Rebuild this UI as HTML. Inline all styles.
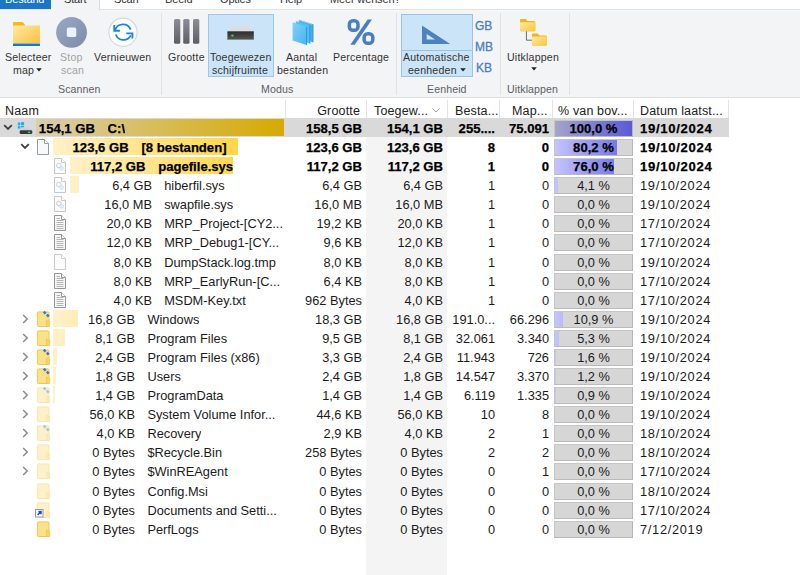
<!DOCTYPE html>
<html><head><meta charset="utf-8">
<style>
*{box-sizing:border-box}
html,body{margin:0;padding:0}
body{width:800px;height:575px;position:relative;overflow:hidden;background:#fff;font-family:"Liberation Sans",sans-serif;color:#1b1b1b}
.a{position:absolute}
.tab{position:absolute;top:-8.5px;font-size:11px;line-height:14px;white-space:nowrap;color:#333;letter-spacing:-.15px}
.rb{position:absolute;font-size:10.6px;line-height:12px;color:#333;white-space:nowrap;letter-spacing:.2px}
.gl{position:absolute;font-size:10.6px;line-height:12px;color:#5e5e5e;white-space:nowrap;top:83px;letter-spacing:.1px}
.sep{position:absolute;top:13px;width:1px;height:82px;background:#e1e2e4}
.hd{position:absolute;top:101.7px;height:19px;font-size:12.5px;line-height:19px;color:#222;white-space:nowrap;letter-spacing:.15px}
.hdiv{position:absolute;top:100px;width:1px;height:18px;background:#e3e3e3}
.row{position:absolute;left:0;width:800px;height:19px;font-size:12.8px;line-height:19px;white-space:nowrap;color:#1b1b1b}
.row span{position:absolute;top:1px}
.b{font-weight:bold;color:#000;font-size:13.1px;-webkit-text-stroke:.25px #000}
.pb{position:absolute;left:554px;width:79px;top:1.8px;height:17px;background:#d6d6d6;border:1px solid #c6c6c6;border-right-color:#b6b6b6;border-bottom-color:#bababa}
.pf{position:absolute;left:0;top:0;bottom:0;background:linear-gradient(90deg,#c4c4ff,#6464e0)}
.pt{position:absolute;left:0;right:0;top:-0.9px;text-align:center;line-height:17px}
.yb{position:absolute;top:1.4px;height:17px}
</style></head><body>

<!-- tab bar -->
<div class="a" style="left:0;top:0;width:800px;height:10px;background:#fff;border-bottom:1px solid #e3e3e3"></div>
<div class="a" style="left:0;top:0;width:51px;height:9.3px;background:#1976c9"></div>
<div class="a" style="left:51px;top:0;width:49px;height:10px;background:#f3f4f6;border-right:1px solid #dcdcdc"></div>
<div class="tab" style="left:5px;color:#fff">Bestand</div>
<div class="tab" style="left:64px">Start</div>
<div class="tab" style="left:114px">Scan</div>
<div class="tab" style="left:165px">Beeld</div>
<div class="tab" style="left:220px">Opties</div>
<div class="tab" style="left:280px">Help</div>
<div class="tab" style="left:330px">Meer wensen?</div>

<!-- ribbon -->
<div class="a" style="left:0;top:10px;width:800px;height:88px;background:#f3f4f6;border-bottom:1px solid #dfe0e2"></div>

<!-- Selecteer map -->
<svg class="a" style="left:12px;top:21px" width="30" height="26" viewBox="0 0 30 26">
 <defs><linearGradient id="fg" x1="0" y1="0" x2="1" y2="1"><stop offset="0" stop-color="#ffe9a6"/><stop offset="1" stop-color="#fcc13a"/></linearGradient></defs>
 <path d="M1 2 Q1 1 2 1 H10.5 L13 3.5 V8 H1 Z" fill="#f6b91c"/>
 <rect x="1" y="4.5" width="27" height="17.5" rx="0.8" fill="url(#fg)"/>
 <rect x="1" y="22.5" width="27" height="2.6" rx="0.5" fill="#1677d2"/>
</svg>
<div class="rb" style="left:5px;top:51px">Selecteer</div>
<div class="rb" style="left:13px;top:63.5px">map</div>
<svg class="a" style="left:35.5px;top:67.5px" width="6" height="4" viewBox="0 0 6 4"><path d="M0.2 0.3 H5.8 L3 3.6 Z" fill="#222"/></svg>

<!-- Stop scan -->
<svg class="a" style="left:55px;top:16px" width="33" height="33" viewBox="0 0 33 33">
 <defs><linearGradient id="sg" x1="0" y1="0" x2="1" y2="1"><stop offset="0" stop-color="#9aa9c2"/><stop offset="1" stop-color="#7b8baa"/></linearGradient></defs>
 <circle cx="16.55" cy="16.35" r="15.45" fill="url(#sg)"/>
 <rect x="11.8" y="11.6" width="9.5" height="9.4" rx="1.8" fill="#ebf2ff"/>
</svg>
<div class="rb" style="left:60px;top:51px;color:#a3a3a3">Stop</div>
<div class="rb" style="left:61px;top:63.5px;color:#a3a3a3">scan</div>

<!-- Vernieuwen -->
<svg class="a" style="left:108px;top:17px" width="31" height="31" viewBox="0 0 31 31">
 <circle cx="15" cy="15.2" r="14.1" fill="#fff" stroke="#d3d9e3" stroke-width="1.2"/>
 <path d="M7.0 13.8 A8.2 8.2 0 0 1 22.65 12.65" fill="none" stroke="#1a84de" stroke-width="1.8"/>
 <path d="M6.25 8.1 V13.75 H11.9" fill="none" stroke="#1a84de" stroke-width="1.9"/>
 <path d="M7.75 17.5 A8.2 8.2 0 0 0 22.8 18.3" fill="none" stroke="#1a84de" stroke-width="1.8"/>
 <path d="M18.3 16.4 H24.4 V21.6" fill="none" stroke="#1a84de" stroke-width="1.9"/>
</svg>
<div class="rb" style="left:94px;top:51px">Vernieuwen</div>
<div class="gl" style="left:58px">Scannen</div>
<div class="sep" style="left:161px"></div>

<!-- Grootte -->
<svg class="a" style="left:173px;top:18px" width="28" height="27" viewBox="0 0 28 27">
 <defs><linearGradient id="gg" x1="0" y1="0" x2="0" y2="1"><stop offset="0" stop-color="#8b8e96"/><stop offset="1" stop-color="#5c5e66"/></linearGradient></defs>
 <rect x="1" y="1" width="6.3" height="24.8" rx="1.5" fill="url(#gg)"/>
 <rect x="10.2" y="1" width="6.3" height="24.8" rx="1.5" fill="url(#gg)"/>
 <rect x="20" y="1" width="6.3" height="24.8" rx="1.5" fill="url(#gg)"/>
</svg>
<div class="rb" style="left:168px;top:51px">Grootte</div>

<!-- Toegewezen schijfruimte (selected) -->
<div class="a" style="left:208px;top:14px;width:66px;height:63px;background:#cce4f7;border:1px solid #99c8ee"></div>
<svg class="a" style="left:226px;top:25px" width="29" height="16" viewBox="0 0 29 16">
 <defs><linearGradient id="dg" x1="0" y1="0" x2="0" y2="1"><stop offset="0" stop-color="#2c2c2c"/><stop offset="1" stop-color="#555"/></linearGradient></defs>
 <path d="M6.8 1 H21.9 L26.6 6.3 H2.3 Z" fill="#dcdde0"/>
 <rect x="1.4" y="6.3" width="26.4" height="8.3" fill="url(#dg)"/>
 <rect x="1.4" y="14.2" width="26.4" height="0.8" fill="#8a8a8a"/>
 <circle cx="6.4" cy="10.6" r="1.2" fill="#3ad34e"/>
</svg>
<div class="rb" style="left:210px;top:51px">Toegewezen</div>
<div class="rb" style="left:212px;top:63.5px">schijfruimte</div>

<!-- Aantal bestanden -->
<svg class="a" style="left:291px;top:19px" width="24" height="28" viewBox="0 0 24 28">
 <defs><linearGradient id="bg1" x1="0" y1="0" x2="1" y2="1"><stop offset="0" stop-color="#80d2f8"/><stop offset="1" stop-color="#46b4f1"/></linearGradient></defs>
 <path d="M8 0.8 L22 5.2 V23.3 L8 19 Z" fill="#45b0ee"/>
 <path d="M8 0.8 L22 5.2 L20.5 5.5 L6.5 1.2 Z" fill="#8fd6f8"/>
 <path d="M4.8 2 L18.8 6.5 V24.6 L4.8 20.3 Z" fill="#58bef4"/>
 <path d="M18.8 6.5 V24.6" stroke="#2a8fd6" stroke-width="0.9"/>
 <path d="M1.6 3.3 L15.6 7.8 V26 L1.6 21.6 Z" fill="url(#bg1)"/>
 <path d="M15.6 7.8 V26" stroke="#2a8fd6" stroke-width="0.9"/>
 <path d="M22 5.2 V23.3" stroke="#2a8fd6" stroke-width="0.9"/>
</svg>
<div class="rb" style="left:286px;top:51px">Aantal</div>
<div class="rb" style="left:277px;top:63.5px">bestanden</div>

<!-- Percentage -->
<svg class="a" style="left:346px;top:18px" width="30" height="28" viewBox="0 0 30 28">
 <rect x="3.35" y="2.75" width="8.65" height="9.5" rx="3.6" fill="none" stroke="#4a7fbf" stroke-width="3.5"/>
 <rect x="18.15" y="15.75" width="8.65" height="9.5" rx="3.6" fill="none" stroke="#4a7fbf" stroke-width="3.5"/>
 <path d="M4.3 26.8 L8.7 26.8 L26 1.6 L21.6 1.6 Z" fill="#4a7fbf"/>
</svg>
<div class="rb" style="left:333px;top:51px">Percentage</div>
<div class="gl" style="left:261px">Modus</div>
<div class="sep" style="left:396px"></div>

<!-- Automatische eenheden -->
<div class="a" style="left:401px;top:14px;width:72px;height:63px;background:#cce4f7;border:1px solid #94c4ec"></div>
<div class="a" style="left:402px;top:50px;width:70px;height:1px;background:#94c4ec"></div>
<svg class="a" style="left:421px;top:25px" width="31" height="21" viewBox="0 0 31 21">
 <path d="M1 0.6 L29.2 18.9 H1 Z" fill="#4d82be"/>
 <path d="M5.7 8.9 L14.1 14.4 H5.7 Z" fill="#cce4f7"/>
</svg>
<div class="rb" style="left:403px;top:51px">Automatische</div>
<div class="rb" style="left:408px;top:63.5px">eenheden</div>
<svg class="a" style="left:460px;top:67.8px" width="6" height="4" viewBox="0 0 6 4"><path d="M0.2 0.3 H5.8 L3 3.6 Z" fill="#222"/></svg>
<div class="a" style="left:475px;top:19px;font-size:12px;line-height:14px;color:#4a7fbf;-webkit-text-stroke:.3px #4a7fbf">GB</div>
<div class="a" style="left:475px;top:40px;font-size:12px;line-height:14px;color:#4a7fbf;-webkit-text-stroke:.3px #4a7fbf">MB</div>
<div class="a" style="left:476px;top:61px;font-size:12px;line-height:14px;color:#4a7fbf;-webkit-text-stroke:.3px #4a7fbf">KB</div>
<div class="gl" style="left:427px">Eenheid</div>
<div class="sep" style="left:500px"></div>

<!-- Uitklappen -->
<svg class="a" style="left:519px;top:18px" width="30" height="30" viewBox="0 0 30 30">
 <defs><linearGradient id="ug" x1="0" y1="0" x2="1" y2="1"><stop offset="0" stop-color="#ffe9a0"/><stop offset="1" stop-color="#fcc53c"/></linearGradient></defs>
 <path d="M7.4 13 V22.2 H13" fill="none" stroke="#6a6a6a" stroke-width="1"/>
 <path d="M1 2.2 Q1 1 2.2 1 H6.8 L8.6 3 H15.2 Q16.3 3 16.3 4 V12 Q16.3 13.2 15.2 13.2 H2.2 Q1 13.2 1 12 Z" fill="#f3b510"/>
 <rect x="1" y="4.2" width="15.3" height="9" rx="0.9" fill="url(#ug)"/>
 <path d="M12.9 16.6 Q12.9 15.4 14.1 15.4 H18.7 L20.5 17.4 H26.6 Q27.75 17.4 27.75 18.4 V26.4 Q27.75 27.6 26.6 27.6 H14.1 Q12.9 27.6 12.9 26.4 Z" fill="#f3b510"/>
 <rect x="12.9" y="18.6" width="14.85" height="9" rx="0.9" fill="url(#ug)"/>
</svg>
<div class="rb" style="left:507px;top:51px">Uitklappen</div>
<svg class="a" style="left:530.5px;top:67.3px" width="6" height="4" viewBox="0 0 6 4"><path d="M0.2 0.3 H5.8 L3 3.6 Z" fill="#222"/></svg>
<div class="gl" style="left:507px">Uitklappen</div>
<div class="sep" style="left:569px"></div>

<!-- header -->
<div class="a" style="left:366px;top:118px;width:81px;height:457px;background:#f4f4f4"></div>
<div class="hd" style="left:5px">Naam</div>
<div class="hdiv" style="left:285px"></div>
<div class="hd" style="right:440px">Grootte</div>
<div class="hdiv" style="left:366px"></div>
<div class="hd" style="left:374px">Toegew...</div>
<svg class="a" style="left:432px;top:108px" width="8" height="5" viewBox="0 0 8 5"><path d="M0.5 0.5 L4 4 L7.5 0.5" fill="none" stroke="#9a9a9a" stroke-width="1"/></svg>
<div class="hdiv" style="left:447px"></div>
<div class="hd" style="left:455px">Besta...</div>
<div class="hdiv" style="left:499px"></div>
<div class="hd" style="left:512px">Map...</div>
<div class="hdiv" style="left:552px"></div>
<div class="hd" style="left:558px">% van bov...</div>
<div class="hdiv" style="left:633px"></div>
<div class="hd" style="left:640px">Datum laatst...</div>
<div class="hdiv" style="left:728px"></div>

<div class="row b" style="top:118.00px;background:linear-gradient(90deg,#d9d9d9 0,#d9d9d9 729px,transparent 729px);"><svg class="a" style="left:3px;top:6px" width="10" height="7" viewBox="0 0 10 7"><path d="M1.2 1.2 L5 5 L8.8 1.2" fill="none" stroke="#404040" stroke-width="1.8"/></svg><svg class="a" style="left:17px;top:3px" width="17" height="16" viewBox="0 0 17 16"><rect x="0.8" y="1.5" width="2.5" height="2.6" fill="#14b6f2"/><rect x="4" y="1.1" width="3.1" height="3" fill="#14b6f2"/><rect x="0.8" y="4.8" width="2.5" height="2.8" fill="#14b6f2"/><rect x="4" y="4.8" width="3.1" height="3" fill="#14b6f2"/><path d="M4.5 6.2 L12 6.2 L14.5 9.3 L3 9.3 Z" fill="#cfd3d9"/><rect x="2.7" y="9.3" width="12.6" height="3.8" rx="1.3" fill="#383838"/><rect x="10.9" y="10.4" width="2.4" height="1.6" rx=".6" fill="#3fcf4a"/></svg><div class="yb" style="left:36px;width:248.0px;background:linear-gradient(90deg,#d9ceae,#d6aa00);background-size:248.0px 100%"></div><span class="sz" style="right:705.1px">154,1 GB</span><span class="nm" style="left:107.6px;max-width:176.4px;overflow:hidden">C:\</span><span style="right:438px">158,5 GB</span><span style="right:357px">154,1 GB</span><span style="right:305px">255....</span><span style="right:251px">75.091</span><div class="pb"><div class="pf" style="width:77.0px;background:linear-gradient(90deg,#a4a4cc,#5a5ad6);background-size:77px 100%"></div><div class="pt">100,0 %</div></div><span style="left:640px;letter-spacing:.7px">19/10/2024</span></div>
<div class="row b" style="top:137.00px;"><svg class="a" style="left:20px;top:6px" width="10" height="7" viewBox="0 0 10 7"><path d="M1.2 1.2 L5 5 L8.8 1.2" fill="none" stroke="#404040" stroke-width="1.8"/></svg><svg class="a" style="left:37px;top:2px" width="13" height="16" viewBox="0 0 13 16"><path d="M0.5 0.5 H7.5 L11.5 4.5 V15.5 H0.5 Z" fill="#f8f9fb" stroke="#9a9a9a"/><path d="M7.5 0.5 V4.5 H11.5" fill="#fff" stroke="#9a9a9a"/></svg><div class="yb" style="left:53.2px;width:185.1px;background:linear-gradient(90deg,#fff1c8,#ffd02a);background-size:230.8px 100%"></div><span class="sz" style="right:671.4px">123,6 GB</span><span class="nm" style="left:141.4px;max-width:142.6px;overflow:hidden">[8 bestanden]</span><span style="right:438px">123,6 GB</span><span style="right:357px">123,6 GB</span><span style="right:305px">8</span><span style="right:251px">0</span><div class="pb"><div class="pf" style="width:61.8px;background-size:77px 100%"></div><div class="pt">80,2 %</div></div><span style="left:640px;letter-spacing:.7px">19/10/2024</span></div>
<div class="row b" style="top:156.00px;"><svg class="a" style="left:54px;top:2px;opacity:.55" width="13" height="16" viewBox="0 0 13 16"><path d="M0.5 0.5 H7.5 L11.5 4.5 V15.5 H0.5 Z" fill="#f8f9fb" stroke="#9a9a9a"/><path d="M7.5 0.5 V4.5 H11.5" fill="#fff" stroke="#9a9a9a"/><circle cx="4.8" cy="7.5" r="2.3" fill="none" stroke="#aaa" stroke-width="1"/><circle cx="7.6" cy="10.4" r="1.8" fill="#cfe8fa" stroke="#8cc0ea" stroke-width=".8"/></svg><div class="yb" style="left:70.3px;width:162.4px;background:linear-gradient(90deg,#fff1c8,#ffd02a);background-size:213.7px 100%"></div><span class="sz" style="right:654.5px">117,2 GB</span><span class="nm" style="left:158.2px;max-width:125.8px;overflow:hidden">pagefile.sys</span><span style="right:438px">117,2 GB</span><span style="right:357px">117,2 GB</span><span style="right:305px">1</span><span style="right:251px">0</span><div class="pb"><div class="pf" style="width:58.5px;background-size:77px 100%"></div><div class="pt">76,0 %</div></div><span style="left:640px;letter-spacing:.7px">19/10/2024</span></div>
<div class="row" style="top:175.00px;"><svg class="a" style="left:54px;top:2px;opacity:.55" width="13" height="16" viewBox="0 0 13 16"><path d="M0.5 0.5 H7.5 L11.5 4.5 V15.5 H0.5 Z" fill="#f8f9fb" stroke="#9a9a9a"/><path d="M7.5 0.5 V4.5 H11.5" fill="#fff" stroke="#9a9a9a"/><circle cx="4.8" cy="7.5" r="2.3" fill="none" stroke="#aaa" stroke-width="1"/><circle cx="7.6" cy="10.4" r="1.8" fill="#cfe8fa" stroke="#8cc0ea" stroke-width=".8"/></svg><div class="yb" style="left:70.3px;width:8.8px;background:linear-gradient(90deg,#fff1c8,#ffd02a);background-size:213.7px 100%"></div><span class="sz" style="right:648.0px">6,4 GB</span><span class="nm" style="left:164.2px;max-width:119.8px;overflow:hidden">hiberfil.sys</span><span style="right:438px">6,4 GB</span><span style="right:357px">6,4 GB</span><span style="right:305px">1</span><span style="right:251px">0</span><div class="pb"><div class="pf" style="width:3.2px;background-size:77px 100%"></div><div class="pt">4,1 %</div></div><span style="left:640px;letter-spacing:.7px">19/10/2024</span></div>
<div class="row" style="top:194.00px;"><svg class="a" style="left:54px;top:2px;opacity:.55" width="13" height="16" viewBox="0 0 13 16"><path d="M0.5 0.5 H7.5 L11.5 4.5 V15.5 H0.5 Z" fill="#f8f9fb" stroke="#9a9a9a"/><path d="M7.5 0.5 V4.5 H11.5" fill="#fff" stroke="#9a9a9a"/><circle cx="4.8" cy="7.5" r="2.3" fill="none" stroke="#aaa" stroke-width="1"/><circle cx="7.6" cy="10.4" r="1.8" fill="#cfe8fa" stroke="#8cc0ea" stroke-width=".8"/></svg><span class="sz" style="right:648.0px">16,0 MB</span><span class="nm" style="left:164.2px;max-width:119.8px;overflow:hidden">swapfile.sys</span><span style="right:438px">16,0 MB</span><span style="right:357px">16,0 MB</span><span style="right:305px">1</span><span style="right:251px">0</span><div class="pb"><div class="pt">0,0 %</div></div><span style="left:640px;letter-spacing:.7px">19/10/2024</span></div>
<div class="row" style="top:213.00px;"><svg class="a" style="left:54px;top:2px" width="13" height="16" viewBox="0 0 13 16"><path d="M0.5 0.5 H7.5 L11.5 4.5 V15.5 H0.5 Z" fill="#f7f7f7" stroke="#959595"/><path d="M7.5 0.5 V4.5 H11.5" fill="#fff" stroke="#959595"/><path d="M2.5 3.5H6 M2.5 5.5H9.5 M2.5 7.5H9.5 M2.5 9.5H9.5 M2.5 11.5H9.5 M2.5 13.5H9.5" stroke="#b4b4b4" stroke-width="1"/></svg><span class="sz" style="right:648.0px">20,0 KB</span><span class="nm" style="left:164.2px;max-width:119.8px;overflow:hidden">MRP_Project-[CY2...</span><span style="right:438px">19,2 KB</span><span style="right:357px">20,0 KB</span><span style="right:305px">1</span><span style="right:251px">0</span><div class="pb"><div class="pt">0,0 %</div></div><span style="left:640px;letter-spacing:.7px">17/10/2024</span></div>
<div class="row" style="top:232.00px;"><svg class="a" style="left:54px;top:2px" width="13" height="16" viewBox="0 0 13 16"><path d="M0.5 0.5 H7.5 L11.5 4.5 V15.5 H0.5 Z" fill="#f7f7f7" stroke="#959595"/><path d="M7.5 0.5 V4.5 H11.5" fill="#fff" stroke="#959595"/><path d="M2.5 3.5H6 M2.5 5.5H9.5 M2.5 7.5H9.5 M2.5 9.5H9.5 M2.5 11.5H9.5 M2.5 13.5H9.5" stroke="#b4b4b4" stroke-width="1"/></svg><span class="sz" style="right:648.0px">12,0 KB</span><span class="nm" style="left:164.2px;max-width:119.8px;overflow:hidden">MRP_Debug1-[CY...</span><span style="right:438px">9,6 KB</span><span style="right:357px">12,0 KB</span><span style="right:305px">1</span><span style="right:251px">0</span><div class="pb"><div class="pt">0,0 %</div></div><span style="left:640px;letter-spacing:.7px">17/10/2024</span></div>
<div class="row" style="top:252.00px;"><svg class="a" style="left:54px;top:2px;opacity:.5" width="13" height="16" viewBox="0 0 13 16"><path d="M0.5 0.5 H7.5 L11.5 4.5 V15.5 H0.5 Z" fill="#f8f9fb" stroke="#9a9a9a"/><path d="M7.5 0.5 V4.5 H11.5" fill="#fff" stroke="#9a9a9a"/></svg><span class="sz" style="right:648.0px">8,0 KB</span><span class="nm" style="left:164.2px;max-width:119.8px;overflow:hidden">DumpStack.log.tmp</span><span style="right:438px">8,0 KB</span><span style="right:357px">8,0 KB</span><span style="right:305px">1</span><span style="right:251px">0</span><div class="pb"><div class="pt">0,0 %</div></div><span style="left:640px;letter-spacing:.7px">19/10/2024</span></div>
<div class="row" style="top:271.00px;"><svg class="a" style="left:54px;top:2px" width="13" height="16" viewBox="0 0 13 16"><path d="M0.5 0.5 H7.5 L11.5 4.5 V15.5 H0.5 Z" fill="#f7f7f7" stroke="#959595"/><path d="M7.5 0.5 V4.5 H11.5" fill="#fff" stroke="#959595"/><path d="M2.5 3.5H6 M2.5 5.5H9.5 M2.5 7.5H9.5 M2.5 9.5H9.5 M2.5 11.5H9.5 M2.5 13.5H9.5" stroke="#b4b4b4" stroke-width="1"/></svg><span class="sz" style="right:648.0px">8,0 KB</span><span class="nm" style="left:164.2px;max-width:119.8px;overflow:hidden">MRP_EarlyRun-[C...</span><span style="right:438px">6,4 KB</span><span style="right:357px">8,0 KB</span><span style="right:305px">1</span><span style="right:251px">0</span><div class="pb"><div class="pt">0,0 %</div></div><span style="left:640px;letter-spacing:.7px">17/10/2024</span></div>
<div class="row" style="top:290.00px;"><svg class="a" style="left:54px;top:2px" width="13" height="16" viewBox="0 0 13 16"><path d="M0.5 0.5 H7.5 L11.5 4.5 V15.5 H0.5 Z" fill="#f7f7f7" stroke="#959595"/><path d="M7.5 0.5 V4.5 H11.5" fill="#fff" stroke="#959595"/><path d="M2.5 3.5H6 M2.5 5.5H9.5 M2.5 7.5H9.5 M2.5 9.5H9.5 M2.5 11.5H9.5 M2.5 13.5H9.5" stroke="#b4b4b4" stroke-width="1"/></svg><span class="sz" style="right:648.0px">4,0 KB</span><span class="nm" style="left:164.2px;max-width:119.8px;overflow:hidden">MSDM-Key.txt</span><span style="right:438px">962 Bytes</span><span style="right:357px">4,0 KB</span><span style="right:305px">1</span><span style="right:251px">0</span><div class="pb"><div class="pt">0,0 %</div></div><span style="left:640px;letter-spacing:.7px">17/10/2024</span></div>
<div class="row" style="top:309.00px;"><svg class="a" style="left:22px;top:5px" width="7" height="10" viewBox="0 0 7 10"><path d="M1.2 1 L5.2 5 L1.2 9" fill="none" stroke="#8a8a8a" stroke-width="1.5"/></svg><svg class="a" style="left:35px;top:2px" width="16" height="17" viewBox="0 0 16 17"><g style=""><rect x="2.4" y="0.9" width="11.6" height="14.6" rx="1" fill="#fde08a" stroke="#f0c850" stroke-width="1"/><path d="M11.4 9 Q14.7 9 14.7 11 V15.6 H11.4 Z" fill="#f8d264" stroke="#f0c850" stroke-width=".8"/><rect x="8.3" y="0.4" width="2.8" height="2.5" fill="#2a7fd4" transform="rotate(45 9.7 1.65)"/><rect x="11.4" y="3.4" width="2.8" height="2.5" fill="#2a7fd4" transform="rotate(45 12.8 4.65)"/></g></svg><div class="yb" style="left:53.2px;width:25.2px;background:linear-gradient(90deg,#fff1c8,#ffd02a);background-size:230.8px 100%"></div><span class="sz" style="right:665.0px">16,8 GB</span><span class="nm" style="left:147.4px;max-width:136.6px;overflow:hidden">Windows</span><span style="right:438px">18,3 GB</span><span style="right:357px">16,8 GB</span><span style="right:305px">191.0...</span><span style="right:251px">66.296</span><div class="pb"><div class="pf" style="width:8.4px;background-size:77px 100%"></div><div class="pt">10,9 %</div></div><span style="left:640px;letter-spacing:.7px">19/10/2024</span></div>
<div class="row" style="top:328.00px;"><svg class="a" style="left:22px;top:5px" width="7" height="10" viewBox="0 0 7 10"><path d="M1.2 1 L5.2 5 L1.2 9" fill="none" stroke="#8a8a8a" stroke-width="1.5"/></svg><svg class="a" style="left:35px;top:2px" width="16" height="17" viewBox="0 0 16 17"><g style=""><rect x="2.4" y="0.9" width="11.6" height="14.6" rx="1" fill="#fde08a" stroke="#f0c850" stroke-width="1"/><path d="M11.4 9 Q14.7 9 14.7 11 V15.6 H11.4 Z" fill="#f8d264" stroke="#f0c850" stroke-width=".8"/></g></svg><div class="yb" style="left:53.2px;width:12.2px;background:linear-gradient(90deg,#fff1c8,#ffd02a);background-size:230.8px 100%"></div><span class="sz" style="right:665.0px">8,1 GB</span><span class="nm" style="left:147.4px;max-width:136.6px;overflow:hidden">Program Files</span><span style="right:438px">9,5 GB</span><span style="right:357px">8,1 GB</span><span style="right:305px">32.061</span><span style="right:251px">3.340</span><div class="pb"><div class="pf" style="width:4.1px;background-size:77px 100%"></div><div class="pt">5,3 %</div></div><span style="left:640px;letter-spacing:.7px">19/10/2024</span></div>
<div class="row" style="top:347.00px;"><svg class="a" style="left:22px;top:5px" width="7" height="10" viewBox="0 0 7 10"><path d="M1.2 1 L5.2 5 L1.2 9" fill="none" stroke="#8a8a8a" stroke-width="1.5"/></svg><svg class="a" style="left:35px;top:2px" width="16" height="17" viewBox="0 0 16 17"><g style=""><rect x="2.4" y="0.9" width="11.6" height="14.6" rx="1" fill="#fde08a" stroke="#f0c850" stroke-width="1"/><path d="M11.4 9 Q14.7 9 14.7 11 V15.6 H11.4 Z" fill="#f8d264" stroke="#f0c850" stroke-width=".8"/><rect x="8.3" y="0.4" width="2.8" height="2.5" fill="#2a7fd4" transform="rotate(45 9.7 1.65)"/><rect x="11.4" y="3.4" width="2.8" height="2.5" fill="#2a7fd4" transform="rotate(45 12.8 4.65)"/></g></svg><div class="yb" style="left:53.2px;width:3.7px;background:linear-gradient(90deg,#fff1c8,#ffd02a);background-size:230.8px 100%"></div><span class="sz" style="right:665.0px">2,4 GB</span><span class="nm" style="left:147.4px;max-width:136.6px;overflow:hidden">Program Files (x86)</span><span style="right:438px">3,3 GB</span><span style="right:357px">2,4 GB</span><span style="right:305px">11.943</span><span style="right:251px">726</span><div class="pb"><div class="pf" style="width:1.2px;background-size:77px 100%"></div><div class="pt">1,6 %</div></div><span style="left:640px;letter-spacing:.7px">19/10/2024</span></div>
<div class="row" style="top:366.00px;"><svg class="a" style="left:22px;top:5px" width="7" height="10" viewBox="0 0 7 10"><path d="M1.2 1 L5.2 5 L1.2 9" fill="none" stroke="#8a8a8a" stroke-width="1.5"/></svg><svg class="a" style="left:35px;top:2px" width="16" height="17" viewBox="0 0 16 17"><g style=""><rect x="2.4" y="0.9" width="11.6" height="14.6" rx="1" fill="#fde08a" stroke="#f0c850" stroke-width="1"/><path d="M11.4 9 Q14.7 9 14.7 11 V15.6 H11.4 Z" fill="#f8d264" stroke="#f0c850" stroke-width=".8"/><rect x="8.3" y="0.4" width="2.8" height="2.5" fill="#2a7fd4" transform="rotate(45 9.7 1.65)"/><rect x="11.4" y="3.4" width="2.8" height="2.5" fill="#2a7fd4" transform="rotate(45 12.8 4.65)"/></g></svg><div class="yb" style="left:53.2px;width:2.8px;background:linear-gradient(90deg,#fff1c8,#ffd02a);background-size:230.8px 100%"></div><span class="sz" style="right:665.0px">1,8 GB</span><span class="nm" style="left:147.4px;max-width:136.6px;overflow:hidden">Users</span><span style="right:438px">2,4 GB</span><span style="right:357px">1,8 GB</span><span style="right:305px">14.547</span><span style="right:251px">3.370</span><div class="pb"><div class="pf" style="width:0.9px;background-size:77px 100%"></div><div class="pt">1,2 %</div></div><span style="left:640px;letter-spacing:.7px">19/10/2024</span></div>
<div class="row" style="top:385.00px;"><svg class="a" style="left:22px;top:5px" width="7" height="10" viewBox="0 0 7 10"><path d="M1.2 1 L5.2 5 L1.2 9" fill="none" stroke="#8a8a8a" stroke-width="1.5"/></svg><svg class="a" style="left:35px;top:2px" width="16" height="17" viewBox="0 0 16 17"><g style="opacity:.45;"><rect x="2.4" y="0.9" width="11.6" height="14.6" rx="1" fill="#fde08a" stroke="#f0c850" stroke-width="1"/><path d="M11.4 9 Q14.7 9 14.7 11 V15.6 H11.4 Z" fill="#f8d264" stroke="#f0c850" stroke-width=".8"/><rect x="8.3" y="0.4" width="2.8" height="2.5" fill="#2a7fd4" transform="rotate(45 9.7 1.65)"/><rect x="11.4" y="3.4" width="2.8" height="2.5" fill="#2a7fd4" transform="rotate(45 12.8 4.65)"/></g></svg><div class="yb" style="left:53.2px;width:2.1px;background:linear-gradient(90deg,#fff1c8,#ffd02a);background-size:230.8px 100%"></div><span class="sz" style="right:665.0px">1,4 GB</span><span class="nm" style="left:147.4px;max-width:136.6px;overflow:hidden">ProgramData</span><span style="right:438px">1,4 GB</span><span style="right:357px">1,4 GB</span><span style="right:305px">6.119</span><span style="right:251px">1.335</span><div class="pb"><div class="pf" style="width:0.7px;background-size:77px 100%"></div><div class="pt">0,9 %</div></div><span style="left:640px;letter-spacing:.7px">19/10/2024</span></div>
<div class="row" style="top:404.00px;"><svg class="a" style="left:22px;top:5px" width="7" height="10" viewBox="0 0 7 10"><path d="M1.2 1 L5.2 5 L1.2 9" fill="none" stroke="#8a8a8a" stroke-width="1.5"/></svg><svg class="a" style="left:35px;top:2px" width="16" height="17" viewBox="0 0 16 17"><g style="opacity:.45;"><rect x="2.4" y="0.9" width="11.6" height="14.6" rx="1" fill="#fde08a" stroke="#f0c850" stroke-width="1"/><path d="M11.4 9 Q14.7 9 14.7 11 V15.6 H11.4 Z" fill="#f8d264" stroke="#f0c850" stroke-width=".8"/></g></svg><span class="sz" style="right:665.0px">56,0 KB</span><span class="nm" style="left:147.4px;max-width:136.6px;overflow:hidden">System Volume Infor...</span><span style="right:438px">44,6 KB</span><span style="right:357px">56,0 KB</span><span style="right:305px">10</span><span style="right:251px">8</span><div class="pb"><div class="pt">0,0 %</div></div><span style="left:640px;letter-spacing:.7px">19/10/2024</span></div>
<div class="row" style="top:423.00px;"><svg class="a" style="left:22px;top:5px" width="7" height="10" viewBox="0 0 7 10"><path d="M1.2 1 L5.2 5 L1.2 9" fill="none" stroke="#8a8a8a" stroke-width="1.5"/></svg><svg class="a" style="left:35px;top:2px" width="16" height="17" viewBox="0 0 16 17"><g style="opacity:.45;"><rect x="2.4" y="0.9" width="11.6" height="14.6" rx="1" fill="#fde08a" stroke="#f0c850" stroke-width="1"/><path d="M11.4 9 Q14.7 9 14.7 11 V15.6 H11.4 Z" fill="#f8d264" stroke="#f0c850" stroke-width=".8"/><rect x="8.3" y="0.4" width="2.8" height="2.5" fill="#2a7fd4" transform="rotate(45 9.7 1.65)"/><rect x="11.4" y="3.4" width="2.8" height="2.5" fill="#2a7fd4" transform="rotate(45 12.8 4.65)"/></g></svg><span class="sz" style="right:665.0px">4,0 KB</span><span class="nm" style="left:147.4px;max-width:136.6px;overflow:hidden">Recovery</span><span style="right:438px">2,9 KB</span><span style="right:357px">4,0 KB</span><span style="right:305px">2</span><span style="right:251px">1</span><div class="pb"><div class="pt">0,0 %</div></div><span style="left:640px;letter-spacing:.7px">18/10/2024</span></div>
<div class="row" style="top:442.00px;"><svg class="a" style="left:22px;top:5px" width="7" height="10" viewBox="0 0 7 10"><path d="M1.2 1 L5.2 5 L1.2 9" fill="none" stroke="#8a8a8a" stroke-width="1.5"/></svg><svg class="a" style="left:35px;top:2px" width="16" height="17" viewBox="0 0 16 17"><g style="opacity:.45;"><rect x="2.4" y="0.9" width="11.6" height="14.6" rx="1" fill="#fde08a" stroke="#f0c850" stroke-width="1"/><path d="M11.4 9 Q14.7 9 14.7 11 V15.6 H11.4 Z" fill="#f8d264" stroke="#f0c850" stroke-width=".8"/></g></svg><span class="sz" style="right:665.0px">0 Bytes</span><span class="nm" style="left:147.4px;max-width:136.6px;overflow:hidden">$Recycle.Bin</span><span style="right:438px">258 Bytes</span><span style="right:357px">0 Bytes</span><span style="right:305px">2</span><span style="right:251px">2</span><div class="pb"><div class="pt">0,0 %</div></div><span style="left:640px;letter-spacing:.7px">18/10/2024</span></div>
<div class="row" style="top:461.00px;"><svg class="a" style="left:22px;top:5px" width="7" height="10" viewBox="0 0 7 10"><path d="M1.2 1 L5.2 5 L1.2 9" fill="none" stroke="#8a8a8a" stroke-width="1.5"/></svg><svg class="a" style="left:35px;top:2px" width="16" height="17" viewBox="0 0 16 17"><g style="opacity:.45;"><rect x="2.4" y="0.9" width="11.6" height="14.6" rx="1" fill="#fde08a" stroke="#f0c850" stroke-width="1"/><path d="M11.4 9 Q14.7 9 14.7 11 V15.6 H11.4 Z" fill="#f8d264" stroke="#f0c850" stroke-width=".8"/></g></svg><span class="sz" style="right:665.0px">0 Bytes</span><span class="nm" style="left:147.4px;max-width:136.6px;overflow:hidden">$WinREAgent</span><span style="right:438px">0 Bytes</span><span style="right:357px">0 Bytes</span><span style="right:305px">0</span><span style="right:251px">1</span><div class="pb"><div class="pt">0,0 %</div></div><span style="left:640px;letter-spacing:.7px">17/10/2024</span></div>
<div class="row" style="top:481.00px;"><svg class="a" style="left:35px;top:2px" width="16" height="17" viewBox="0 0 16 17"><g style="opacity:.45;"><rect x="2.4" y="0.9" width="11.6" height="14.6" rx="1" fill="#fde08a" stroke="#f0c850" stroke-width="1"/><path d="M11.4 9 Q14.7 9 14.7 11 V15.6 H11.4 Z" fill="#f8d264" stroke="#f0c850" stroke-width=".8"/></g></svg><span class="sz" style="right:665.0px">0 Bytes</span><span class="nm" style="left:147.4px;max-width:136.6px;overflow:hidden">Config.Msi</span><span style="right:438px">0 Bytes</span><span style="right:357px">0 Bytes</span><span style="right:305px">0</span><span style="right:251px">0</span><div class="pb"><div class="pt">0,0 %</div></div><span style="left:640px;letter-spacing:.7px">18/10/2024</span></div>
<div class="row" style="top:500.00px;"><svg class="a" style="left:35px;top:2px" width="16" height="17" viewBox="0 0 16 17"><g style="opacity:.45;"><rect x="2.4" y="0.9" width="11.6" height="14.6" rx="1" fill="#fde08a" stroke="#f0c850" stroke-width="1"/><path d="M11.4 9 Q14.7 9 14.7 11 V15.6 H11.4 Z" fill="#f8d264" stroke="#f0c850" stroke-width=".8"/></g><rect x="0.5" y="7.5" width="7.5" height="7.5" fill="#fff" stroke="#9a9a9a" stroke-width="1"/><path d="M2.6 13 L5.6 10 M3.4 9.6 H6 V12.2" stroke="#1f56b0" stroke-width="1.6" fill="none"/></svg><span class="sz" style="right:665.0px">0 Bytes</span><span class="nm" style="left:147.4px;max-width:136.6px;overflow:hidden">Documents and Setti...</span><span style="right:438px">0 Bytes</span><span style="right:357px">0 Bytes</span><span style="right:305px">0</span><span style="right:251px">0</span><div class="pb"><div class="pt">0,0 %</div></div><span style="left:640px;letter-spacing:.7px">17/10/2024</span></div>
<div class="row" style="top:519.00px;"><svg class="a" style="left:35px;top:2px" width="16" height="17" viewBox="0 0 16 17"><g style=""><rect x="2.4" y="0.9" width="11.6" height="14.6" rx="1" fill="#fde08a" stroke="#f0c850" stroke-width="1"/><path d="M11.4 9 Q14.7 9 14.7 11 V15.6 H11.4 Z" fill="#f8d264" stroke="#f0c850" stroke-width=".8"/></g></svg><span class="sz" style="right:665.0px">0 Bytes</span><span class="nm" style="left:147.4px;max-width:136.6px;overflow:hidden">PerfLogs</span><span style="right:438px">0 Bytes</span><span style="right:357px">0 Bytes</span><span style="right:305px">0</span><span style="right:251px">0</span><div class="pb"><div class="pt">0,0 %</div></div><span style="left:640px;letter-spacing:.7px">7/12/2019</span></div>
</body></html>
